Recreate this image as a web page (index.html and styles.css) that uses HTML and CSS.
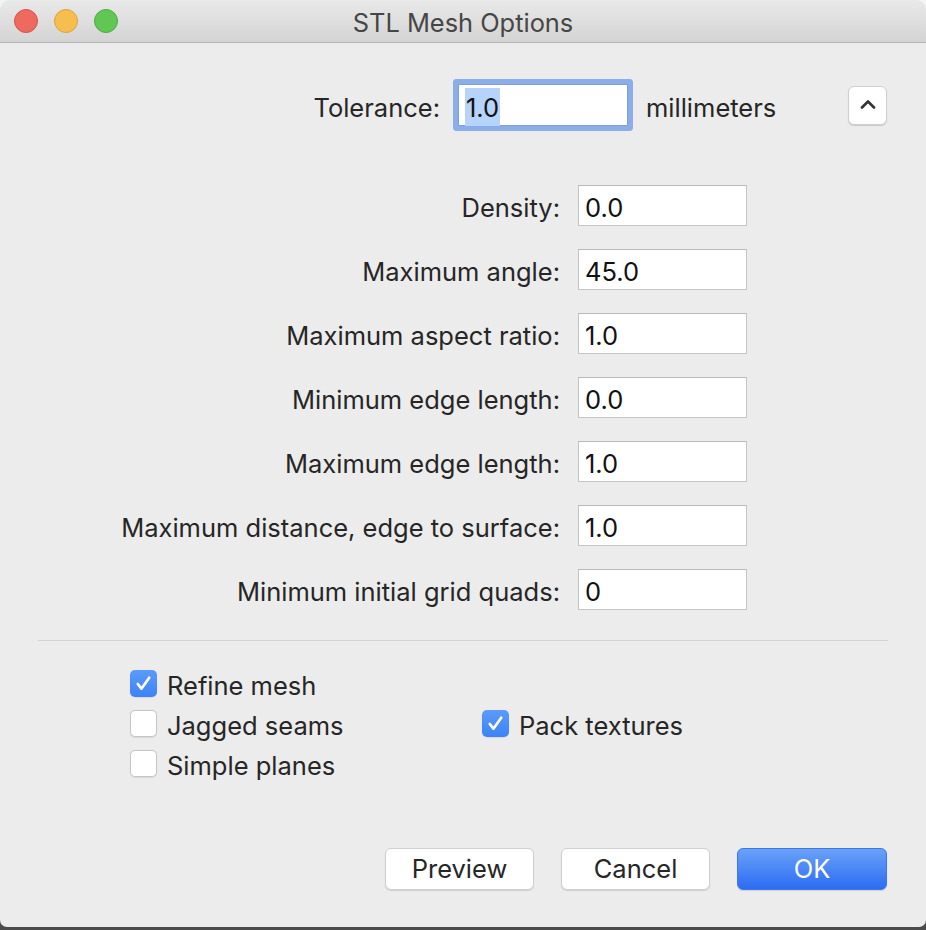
FILE: index.html
```html
<!DOCTYPE html>
<html lang="en">
<head>
<meta charset="utf-8">
<title>STL Mesh Options</title>
<link rel="stylesheet" href="styles.css">
</head>
<body>
<div class="window">
  <div class="titlebar">
    <div class="lights">
      <span class="light red"></span>
      <span class="light yellow"></span>
      <span class="light green"></span>
    </div>
    <div class="title">STL Mesh Options</div>
    <div></div>
  </div>
  <div class="content">
    <div class="tol-row">
      <span class="tol-label">Tolerance:</span>
      <div class="field tol-field"><span class="sel">1.0</span></div>
      <span class="unit">millimeters</span>
      <button class="collapse" type="button">
        <svg width="16" height="10" viewBox="0 0 16 10"><polyline points="2,8.5 8,2.5 14,8.5" fill="none" stroke="#333" stroke-width="2.6" stroke-linecap="round" stroke-linejoin="round"/></svg>
      </button>
    </div>
    <div class="form">
      <span class="label">Density:</span><div class="field">0.0</div>
      <span class="label">Maximum angle:</span><div class="field">45.0</div>
      <span class="label">Maximum aspect ratio:</span><div class="field">1.0</div>
      <span class="label">Minimum edge length:</span><div class="field">0.0</div>
      <span class="label">Maximum edge length:</span><div class="field">1.0</div>
      <span class="label">Maximum distance, edge to surface:</span><div class="field">1.0</div>
      <span class="label">Minimum initial grid quads:</span><div class="field">0</div>
    </div>
    <div class="sep"></div>
    <div class="checks">
      <div class="check"><span class="box on"><svg width="26" height="26" viewBox="0 0 26 26"><polyline points="7.5,13.5 11,18 18.5,7.5" fill="none" stroke="#fff" stroke-width="2.6" stroke-linecap="round" stroke-linejoin="round"/></svg></span><span class="ctext">Refine mesh</span></div>
      <div></div>
      <div class="check"><span class="box"></span><span class="ctext">Jagged seams</span></div>
      <div class="check"><span class="box on"><svg width="26" height="26" viewBox="0 0 26 26"><polyline points="7.5,13.5 11,18 18.5,7.5" fill="none" stroke="#fff" stroke-width="2.6" stroke-linecap="round" stroke-linejoin="round"/></svg></span><span class="ctext">Pack textures</span></div>
      <div class="check"><span class="box"></span><span class="ctext">Simple planes</span></div>
      <div></div>
    </div>
    <div class="buttons">
      <button class="btn" type="button">Preview</button>
      <button class="btn" type="button">Cancel</button>
      <button class="btn primary" type="button">OK</button>
    </div>
  </div>
</div>
</body>
</html>
```

FILE: styles.css
```css
* { box-sizing: border-box; }
html, body { margin: 0; padding: 0; }
body {
  width: 926px;
  height: 930px;
  background: linear-gradient(to bottom, #f4f4f4 0, #f4f4f4 900px, #4b4b4b 900px, #4b4b4b 930px);
  font-family: Inter, "Noto Sans", "Liberation Sans", sans-serif;
  color: #262626;
  overflow: hidden;
}
.window {
  width: 926px;
  height: 927px;
  background: #ececec;
  border-radius: 10px 10px 7px 7px;
  overflow: hidden;
}
.titlebar {
  height: 43px;
  display: grid;
  grid-template-columns: 1fr auto 1fr;
  align-items: center;
  background: linear-gradient(to bottom, #e9e9e9, #d4d4d4);
  border-bottom: 1px solid #b4b4b4;
}
.lights {
  display: flex;
  gap: 16px;
  padding-left: 14px;
}
.light {
  width: 24px;
  height: 24px;
  border-radius: 50%;
  display: block;
}
.red { background: #ee6a5f; border: 1px solid #d5544a; }
.yellow { background: #f6be4f; border: 1px solid #d9a23f; }
.green { background: #62c655; border: 1px solid #4fab41; }
.title {
  font-size: 25.4px;
  color: #464646;
  padding-top: 3px;
}
.content {
  padding-top: 41px;
}
.tol-row {
  display: flex;
  align-items: center;
  height: 42px;
}
.tol-label {
  width: 440px;
  text-align: right;
  font-size: 25.5px;
  padding-top: 4px;
}
.field {
  background: #fff;
  border: 1px solid #c4c4c4;
  border-top-color: #b8b8b8;
  height: 41px;
  font-size: 25.5px;
  color: #111;
  display: flex;
  align-items: center;
  padding: 4px 0 0 6px;
}
.tol-field {
  margin-left: 18px;
  width: 170px;
  height: 42px;
  border-color: #7c9fd9;
  box-shadow: 0 0 0 5px #8bade9;
  border-radius: 1px;
}
.sel {
  background: #b5d3fb;
  padding: 4px 1px 3px 1px;
}
.unit {
  margin-left: 18px;
  font-size: 25.5px;
  padding-top: 4px;
}
.collapse {
  margin-left: auto;
  margin-right: 39px;
  width: 39px;
  height: 39px;
  background: #fff;
  border: 1px solid #d0d0d0;
  border-radius: 6px;
  box-shadow: 0 1px 1px rgba(0,0,0,0.15);
  display: flex;
  align-items: center;
  justify-content: center;
  padding: 0 0 3px 0;
}
.form {
  margin-top: 59px;
  width: 747px;
  display: grid;
  grid-template-columns: 1fr 169px;
  column-gap: 18px;
  row-gap: 23px;
  align-items: center;
}
.label {
  text-align: right;
  font-size: 25.5px;
  padding-top: 4px;
}
.sep {
  margin: 30px 38px 0 38px;
  height: 1px;
  background: #d3d3d3;
}
.checks {
  margin-top: 29px;
  padding-left: 130px;
  display: grid;
  grid-template-columns: 352px auto;
  grid-auto-rows: 27px;
  row-gap: 13px;
}
.check {
  display: flex;
  align-items: center;
  gap: 10px;
  font-size: 25.5px;
}
.ctext {
  padding-top: 3px;
}
.box {
  width: 27px;
  height: 27px;
  border-radius: 5px;
  background: #fff;
  border: 1px solid #c6c6c6;
  box-shadow: 0 0.5px 1px rgba(0,0,0,0.08);
  flex: none;
  display: block;
}
.box.on {
  background: linear-gradient(to bottom, #5b9bf8, #3c83f5);
  border: none;
}
.box svg { display: block; width: 27px; height: 27px; }
.buttons {
  margin-top: 71px;
  display: flex;
  justify-content: flex-end;
  gap: 27px;
  padding-right: 39px;
}
.btn {
  width: 149px;
  height: 42px;
  background: #fff;
  border: 1px solid #cfcfcf;
  border-radius: 6px;
  box-shadow: 0 1px 1px rgba(0,0,0,0.12);
  font-family: Inter, "Noto Sans", "Liberation Sans", sans-serif;
  font-size: 25.5px;
  color: #262626;
  padding: 0 0 2px 0;
}
.btn.primary {
  width: 150px;
  background: linear-gradient(to bottom, #6aa1f8, #2b6cf3);
  border: 1px solid #3d79ee;
  color: #fff;
}
```
